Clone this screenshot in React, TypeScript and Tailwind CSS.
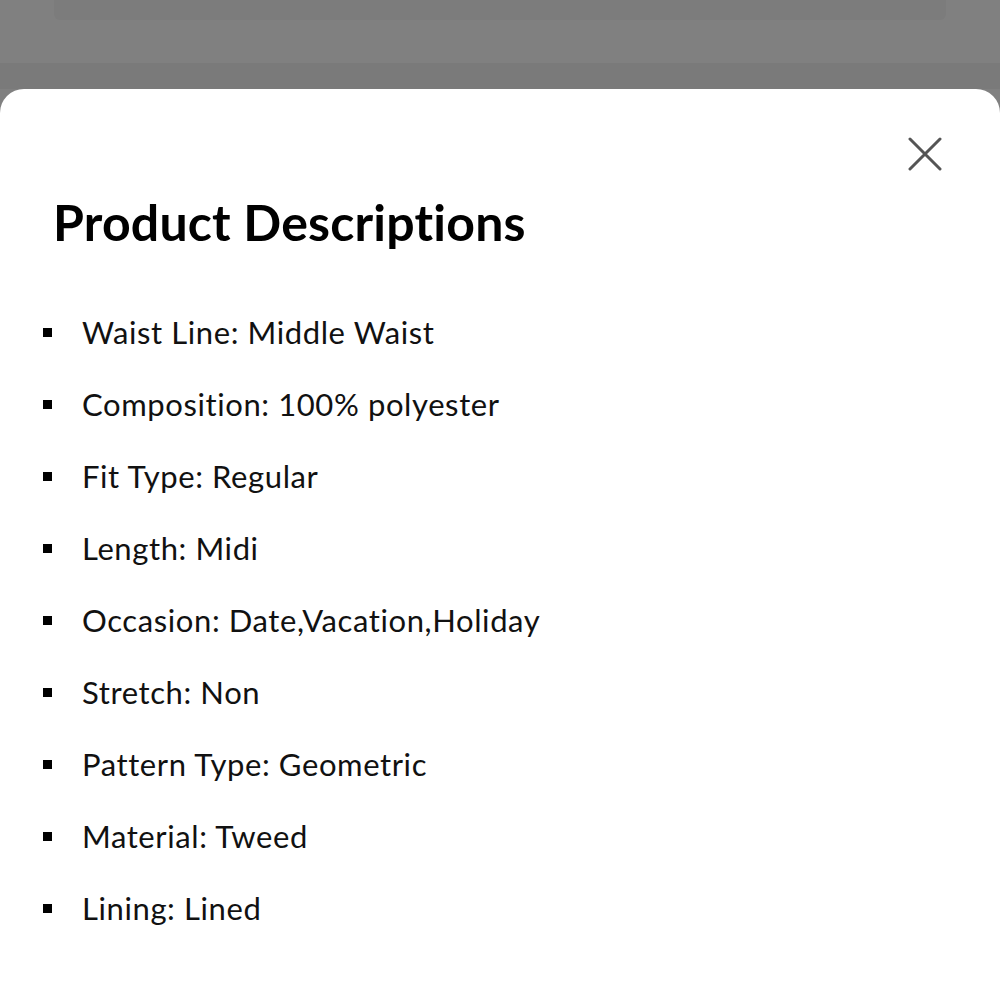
import React from 'react';

const specs = [
  'Waist Line: Middle Waist',
  'Composition: 100% polyester',
  'Fit Type: Regular',
  'Length: Midi',
  'Occasion: Date,Vacation,Holiday',
  'Stretch: Non',
  'Pattern Type: Geometric',
  'Material: Tweed',
  'Lining: Lined',
];

export default function App() {
  return (
    <div className="w-[1000px] h-[1000px] overflow-hidden bg-[#808080] flex flex-col font-['Lato',sans-serif] [font-variant-ligatures:none]">
      {/* dimmed page behind the sheet */}
      <div className="h-[63px] shrink-0 px-[54px]">
        <div className="h-[20px] bg-[#7c7c7c] rounded-b-[6px]" />
      </div>
      <div className="h-[26px] shrink-0 bg-[#7a7a7a]" />

      {/* bottom sheet */}
      <div className="flex-1 bg-white rounded-t-[24px] relative">
        <button className="absolute right-[56px] top-[46px] w-[38px] h-[38px] flex items-center justify-center text-[#555]">
          <svg width="34" height="34" viewBox="0 0 34 34" fill="none" stroke="currentColor" strokeWidth="3" strokeLinecap="round">
            <path d="M2 2L32 32M32 2L2 32" />
          </svg>
        </button>

        <h2 className="pl-[53px] pt-[103px] text-[50px] leading-[60px] font-bold text-black tracking-[0.2px]">
          Product Descriptions
        </h2>

        <ul className="mt-[44px] flex flex-col">
          {specs.map((s) => (
            <li key={s} className="h-[72px] flex items-center">
              <span className="ml-[43px] w-[9px] h-[9px] bg-black shrink-0" />
              <span className="ml-[30px] text-[31px] tracking-[0.6px] text-[#111]">{s}</span>
            </li>
          ))}
        </ul>
      </div>
    </div>
  );
}
